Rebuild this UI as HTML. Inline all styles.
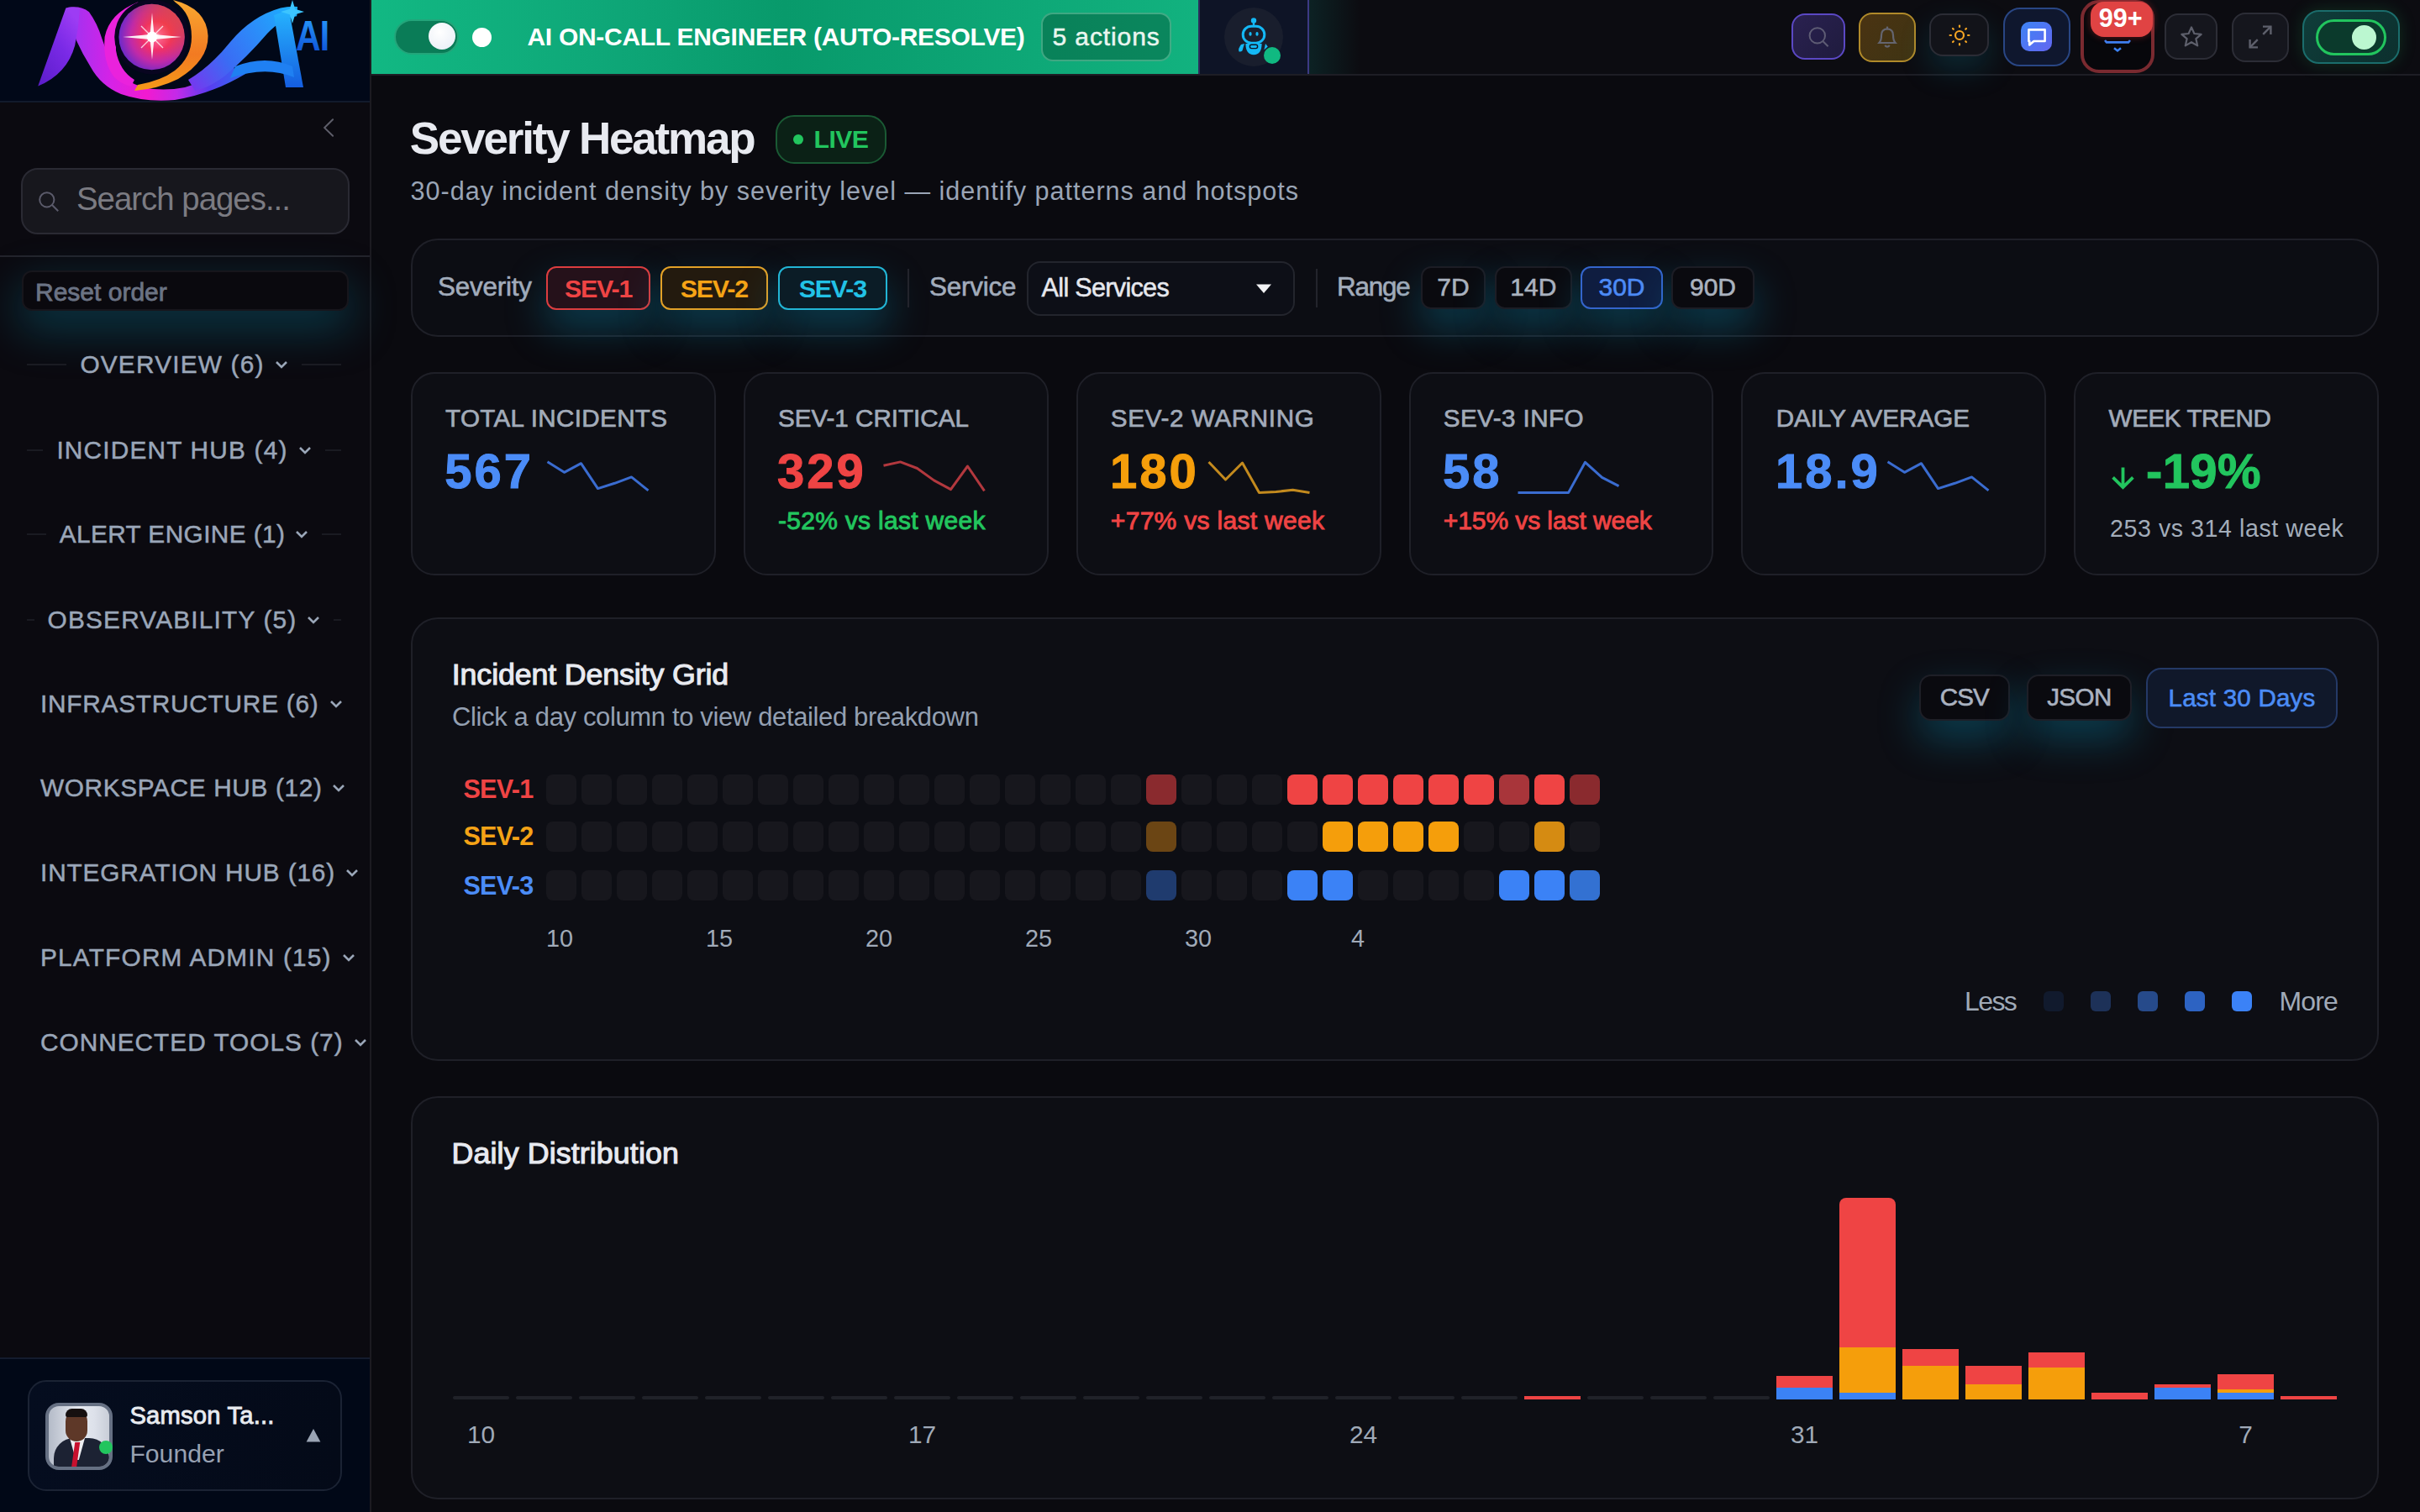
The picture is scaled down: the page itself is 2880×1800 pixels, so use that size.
<!DOCTYPE html>
<html><head><meta charset="utf-8">
<style>
html,body{margin:0;padding:0;background:#0a0a0f;overflow:hidden;}
#root{position:relative;width:1440px;height:900px;overflow:hidden;background:#0a0a0f;font-family:"Liberation Sans",sans-serif;}
.a{position:absolute;}
.t{position:absolute;white-space:nowrap;line-height:1;}
/* sidebar */
#side{position:absolute;left:0;top:0;width:221px;height:900px;background:#0b0a10;border-right:1px solid #1c1b21;box-sizing:border-box;}
#logo{position:absolute;left:0;top:0;width:220px;height:60px;background:#010818;border-bottom:1px solid #121a2c;}
.nav{position:absolute;left:0;width:219px;height:20px;}
.navt{position:absolute;white-space:nowrap;line-height:1;font-size:14.9px;color:#9aa6b8;letter-spacing:0.6px;font-weight:400;-webkit-text-stroke:0.25px #9aa6b8;}
.nline{position:absolute;height:1px;background:#1c1d24;}
/* topbar */
#top{position:absolute;left:221px;top:0;width:1219px;height:44px;background:#0c0c11;border-bottom:1px solid #1e1e25;box-sizing:content-box;}
.ib{position:absolute;box-sizing:border-box;border-radius:8px;}
/* main */
.card{position:absolute;box-sizing:border-box;background:#0d0e14;border:1px solid #1f2028;border-radius:14px;}
.glow{box-shadow:0 11px 24px rgba(8,140,175,0.38);}
.chip{position:absolute;box-sizing:border-box;border-radius:6px;display:flex;align-items:center;justify-content:center;white-space:nowrap;line-height:1;}
.lab{color:#a2abb9;font-size:14.8px;letter-spacing:0px;font-weight:400;-webkit-text-stroke:0.35px #a2abb9;}
.num{font-size:29px;font-weight:700;letter-spacing:1.5px;-webkit-text-stroke:0.5px currentColor;}
.cell{position:absolute;width:18px;height:18px;border-radius:4px;background:#17171d;}
.navrow{position:absolute;left:16px;width:187px;height:20px;display:flex;align-items:center;justify-content:center;justify-content:safe center;}
.navrow .navl{flex:1 1 0;height:1px;background:#1a1b22;min-width:0;}
.navrow .navt{position:static;margin-left:8px;}
.navrow .chv{position:static;margin-left:6px;margin-right:8px;flex:none;}
@media (min-width: 2000px){ #root{zoom:2;} }
</style></head>
<body><div id="root">

<!-- ============ SIDEBAR ============ -->

<div id="side">
  <div id="logo">
  <svg width="220" height="60" viewBox="0 0 220 60" style="position:absolute;left:0;top:0">
    <defs>
      <linearGradient id="gN" x1="0" y1="1" x2="0.7" y2="0"><stop offset="0" stop-color="#5a1cc8"/><stop offset="0.6" stop-color="#7a2ae6"/><stop offset="1" stop-color="#9d3cf4"/></linearGradient>
      <linearGradient id="gSw" gradientUnits="userSpaceOnUse" x1="40" y1="0" x2="145" y2="0"><stop offset="0" stop-color="#9a34f2"/><stop offset="0.25" stop-color="#d622e6"/><stop offset="0.45" stop-color="#f21ad0"/><stop offset="0.62" stop-color="#c42ae8"/><stop offset="0.8" stop-color="#5a3cf0"/><stop offset="1" stop-color="#2f6cf2"/></linearGradient>
      <linearGradient id="gBl" gradientUnits="userSpaceOnUse" x1="110" y1="50" x2="178" y2="4"><stop offset="0" stop-color="#7a34ee"/><stop offset="0.35" stop-color="#3a6cf4"/><stop offset="1" stop-color="#1ab4ff"/></linearGradient>
      <linearGradient id="gA" x1="0" y1="0" x2="0" y2="1"><stop offset="0" stop-color="#26b4ff"/><stop offset="1" stop-color="#155ee0"/></linearGradient>
      <radialGradient id="gOrb" cx="0.58" cy="0.48" r="0.62"><stop offset="0" stop-color="#fff2f8"/><stop offset="0.08" stop-color="#ff6aa0"/><stop offset="0.35" stop-color="#f0306a"/><stop offset="0.65" stop-color="#c02aa8"/><stop offset="1" stop-color="#5a2ad0"/></radialGradient>
      <linearGradient id="gOrbR" x1="0" y1="1" x2="1" y2="0"><stop offset="0.45" stop-color="#f04a20" stop-opacity="0"/><stop offset="1" stop-color="#f05a18" stop-opacity="0.85"/></linearGradient>
      <linearGradient id="gOr" x1="0" y1="0" x2="0" y2="1"><stop offset="0" stop-color="#f8a830"/><stop offset="0.6" stop-color="#f27a22"/><stop offset="1" stop-color="#f59a18"/></linearGradient>
      <linearGradient id="gAI" x1="0" y1="0" x2="0" y2="1"><stop offset="0" stop-color="#2aa0ff"/><stop offset="1" stop-color="#0a46d0"/></linearGradient>
    </defs>
    <!-- bottom swoosh (N diagonal) -->
    <path d="M40.2 4.5 Q48 3.2 53 7.1 Q58 14 60.6 22.8 Q64 33 69 41 Q75 49 85 52 Q97 54.5 110 52 Q124 48 138 40 L146 44 Q126 56 104 59.5 Q86 61 72 56 Q60 51 54 40 Q49 32 45.4 24 Q42 14 40.2 4.5Z" fill="url(#gSw)"/>
    <!-- N left leg -->
    <path d="M22.6 51.3 L39.2 4.8 Q43.5 3.6 47.5 5.2 Q46.8 16 44.6 27 Q40 44 22.6 51.3Z" fill="url(#gN)"/>
    <!-- magenta ring -->
    <path d="M82 1.2 Q65 8 62.3 22 Q61 37 68 46 Q72 50 78 51.5 L80 47.5 Q71 42 69 30 Q68 13 85 4Z" fill="#ea22dc"/>
    <!-- dark ring + orb -->
    <circle cx="90.3" cy="22" r="22.2" fill="#080520"/>
    <circle cx="90.3" cy="22" r="19.6" fill="url(#gOrb)"/>
    <circle cx="90.3" cy="22" r="19.6" fill="url(#gOrbR)"/>
    <!-- star -->
    <path d="M90.5 7.5 L91.7 20.5 L108 22 L91.7 23.5 L90.5 35.5 L89.3 23.5 L73 22 L89.3 20.5Z" fill="#fff" opacity="0.92"/>
    <path d="M84 15.5 L97 28.5 M97 15.5 L84 28.5" stroke="#fff" stroke-width="0.7" opacity="0.75"/>
    <circle cx="90.5" cy="22" r="3.2" fill="#fff"/>
    <!-- orange crescent + lower orange band -->
    <path d="M103 0 Q123 5 123.8 21.4 Q124 36 106 47 Q94 53 80 54 L82 50.5 Q96 48 104 42 Q114 34 114 22 Q114 8 104.5 1.5Z" fill="url(#gOr)"/>
    <!-- upper blue band -->
    <path d="M112 47.5 Q125 40 137 25 Q150 9.5 167 4.8 Q172 3.6 177 4 L176.6 9.6 Q168 10.5 159 20 Q147 34 134 45 Q125 52 116 54Z" fill="url(#gBl)"/>
    <!-- A right leg + crossbar -->
    <path d="M163 9 L172 6 L180.5 52 L170 52Z" fill="url(#gA)"/>
    <path d="M140 39.5 Q158 32.5 174 39.5 L175 46 Q158 39 137 46.5Z" fill="#1f80f2"/>
    <path d="M174 0 L175.6 5.4 L181 7 L175.6 8.6 L174 14 L172.4 8.6 L167 7 L172.4 5.4Z" fill="#3cc4ff"/>
    <g transform="translate(176,30) scale(0.82,1)"><text x="0" y="0" font-family="Liberation Sans" font-weight="700" font-size="25" fill="url(#gAI)" letter-spacing="-0.5">AI</text></g>
  </svg>
  </div>
  <svg class="a" style="left:191px;top:70px" width="9" height="13" viewBox="0 0 9 13"><path d="M7.05 1.1 L2.1 6.05 L7.05 10.85" stroke="#5e5e6a" stroke-width="1" fill="none" stroke-linecap="round"/></svg>
  <div class="a" style="left:12.25px;top:100.2px;width:195.5px;height:39.5px;box-sizing:border-box;border:1px solid #2a2a33;border-radius:10px;background:#17171d;"></div>
  <svg class="a" style="left:22px;top:113px" width="14" height="14" viewBox="0 0 14 14"><circle cx="5.9" cy="5.9" r="4.3" stroke="#5b5b6b" stroke-width="1" fill="none"/><path d="M9 9 L12.6 12.6" stroke="#5b5b6b" stroke-width="1"/></svg>
  <div class="t" style="left:45.5px;top:108.8px;font-size:19.2px;color:#7b7b82;letter-spacing:-0.5px;">Search pages...</div>
  <div class="a" style="left:0;top:152px;width:220px;height:1px;background:#23232b;"></div>
    <div class="a" style="left:12.75px;top:161.2px;width:194.5px;height:24px;box-sizing:border-box;border:1px solid #17161c;border-radius:6px;background:#0a090e;box-shadow:0 10px 26px 2px rgba(8,135,165,0.34);"></div>
  <div class="t" style="left:21px;top:166.4px;font-size:15px;color:#6b7384;-webkit-text-stroke:0.4px #6b7384;">Reset order</div>
  <div class="navrow" style="top:207.00px"><span class="navl"></span><span class="navt">OVERVIEW (6)</span><svg class="chv" width="8" height="5" viewBox="0 0 8 5"><path d="M1 1 L4 4 L7 1" stroke="#9aa6b8" stroke-width="1.3" fill="none"/></svg><span class="navl"></span></div>
  <div class="navrow" style="top:257.75px"><span class="navl"></span><span class="navt">INCIDENT HUB (4)</span><svg class="chv" width="8" height="5" viewBox="0 0 8 5"><path d="M1 1 L4 4 L7 1" stroke="#9aa6b8" stroke-width="1.3" fill="none"/></svg><span class="navl"></span></div>
  <div class="navrow" style="top:307.80px"><span class="navl"></span><span class="navt" style="letter-spacing:0.20px">ALERT ENGINE (1)</span><svg class="chv" width="8" height="5" viewBox="0 0 8 5"><path d="M1 1 L4 4 L7 1" stroke="#9aa6b8" stroke-width="1.3" fill="none"/></svg><span class="navl"></span></div>
  <div class="navrow" style="top:358.75px"><span class="navl"></span><span class="navt">OBSERVABILITY (5)</span><svg class="chv" width="8" height="5" viewBox="0 0 8 5"><path d="M1 1 L4 4 L7 1" stroke="#9aa6b8" stroke-width="1.3" fill="none"/></svg><span class="navl"></span></div>
  <div class="navrow" style="top:408.90px"><span class="navl"></span><span class="navt" style="letter-spacing:0.38px">INFRASTRUCTURE (6)</span><svg class="chv" width="8" height="5" viewBox="0 0 8 5"><path d="M1 1 L4 4 L7 1" stroke="#9aa6b8" stroke-width="1.3" fill="none"/></svg><span class="navl"></span></div>
  <div class="navrow" style="top:458.85px"><span class="navl"></span><span class="navt" style="letter-spacing:0.32px">WORKSPACE HUB (12)</span><svg class="chv" width="8" height="5" viewBox="0 0 8 5"><path d="M1 1 L4 4 L7 1" stroke="#9aa6b8" stroke-width="1.3" fill="none"/></svg><span class="navl"></span></div>
  <div class="navrow" style="top:509.65px"><span class="navl"></span><span class="navt" style="letter-spacing:0.43px">INTEGRATION HUB (16)</span><svg class="chv" width="8" height="5" viewBox="0 0 8 5"><path d="M1 1 L4 4 L7 1" stroke="#9aa6b8" stroke-width="1.3" fill="none"/></svg><span class="navl"></span></div>
  <div class="navrow" style="top:559.90px"><span class="navl"></span><span class="navt">PLATFORM ADMIN (15)</span><svg class="chv" width="8" height="5" viewBox="0 0 8 5"><path d="M1 1 L4 4 L7 1" stroke="#9aa6b8" stroke-width="1.3" fill="none"/></svg><span class="navl"></span></div>
  <div class="navrow" style="top:610.60px"><span class="navl"></span><span class="navt" style="letter-spacing:0.50px">CONNECTED TOOLS (7)</span><svg class="chv" width="8" height="5" viewBox="0 0 8 5"><path d="M1 1 L4 4 L7 1" stroke="#9aa6b8" stroke-width="1.3" fill="none"/></svg><span class="navl"></span></div>

  <div class="a" style="left:0;top:808px;width:220px;height:92px;border-top:1px solid #141c2e;background:#010817;"></div>
  <div class="a" style="left:16.4px;top:821.3px;width:187px;height:66px;box-sizing:border-box;border:1px solid #1b2334;border-radius:11px;background:linear-gradient(90deg,#050d1f,#040a18);"></div>
  <div class="a" style="left:27px;top:835px;width:40px;height:40px;box-sizing:border-box;border:2.2px solid #667083;border-radius:8px;overflow:hidden;background:linear-gradient(90deg,#b4bbc8,#e6e9f0 50%,#dde1ea 75%,#c9ced8);">
     <div class="a" style="left:3px;top:19px;width:33px;height:24px;border-radius:12px 12px 0 0;background:#1c2233;"></div>
     <div class="a" style="left:12.5px;top:19px;width:9px;height:13px;background:#eeeef2;clip-path:polygon(0 0,100% 0,60% 100%,40% 100%);"></div>
     <div class="a" style="left:14.6px;top:21.5px;width:3.2px;height:16px;background:#c8102e;transform:skewX(-8deg);"></div>
     <div class="a" style="left:9.8px;top:2.5px;width:13px;height:18.5px;border-radius:6.5px 6.5px 6.5px 6.5px;background:#5e3828;"></div>
     <div class="a" style="left:9.8px;top:1.5px;width:13px;height:5px;border-radius:6.5px 6.5px 2px 2px;background:#161010;"></div>
  </div>
  <div class="a" style="left:58.9px;top:857.5px;width:8.2px;height:8.2px;border-radius:50%;background:#22c55e;"></div>
  <div class="t" style="left:77.2px;top:835.7px;font-size:14.6px;color:#e8ebf0;-webkit-text-stroke:0.45px #e8ebf0;letter-spacing:0.1px;">Samson Ta...</div>
  <div class="t" style="left:77.2px;top:858.1px;font-size:15.1px;color:#97a1b2;">Founder</div>
  <svg class="a" style="left:181.5px;top:850px" width="10" height="9" viewBox="0 0 10 9"><path d="M5 0.5 L9.2 8.3 L0.8 8.3Z" fill="#9aa4b4"/></svg>
</div>


<!-- ============ TOPBAR ============ -->

<div id="top"></div>
<div class="a" style="left:221px;top:0;width:492px;height:44px;background:linear-gradient(90deg,#12b883 0%,#0ea677 30%,#089a6b 50%,#0ca373 70%,#12b27f 100%);"></div>
<div class="a" style="left:234.4px;top:11.25px;width:38.8px;height:21.1px;box-sizing:border-box;border-radius:11px;background:#0a7c57;border:1px solid #23a57a;"></div>
<div class="a" style="left:255px;top:13.6px;width:16px;height:16px;border-radius:50%;background:radial-gradient(circle at 40% 35%,#ffffff,#e6ecf5);"></div>
<div class="a" style="left:281.1px;top:16.5px;width:11.5px;height:11.5px;border-radius:50%;background:#fff;"></div>
<div class="t" style="left:313.7px;top:14.4px;font-size:15px;font-weight:700;color:#fff;letter-spacing:-0.14px;">AI ON-CALL ENGINEER (AUTO-RESOLVE)</div>
<div class="a" style="left:619.6px;top:7.45px;width:77.6px;height:29.25px;box-sizing:border-box;border-radius:7px;background:rgba(0,60,35,0.36);border:1px solid rgba(190,255,225,0.30);"></div>
<div class="t" style="left:626.3px;top:14.4px;font-size:15px;color:#e9f6ef;letter-spacing:0.44px;-webkit-text-stroke:0.25px #e9f6ef;">5 actions</div>
<div class="a" style="left:713px;top:0;width:66px;height:44px;box-sizing:border-box;background:#0e1426;border-left:1px solid #2e2c5c;border-right:1px solid #3d3a84;"></div>
<div class="a" style="left:779px;top:0;width:30px;height:44px;background:linear-gradient(90deg,rgba(13,148,136,0.16),rgba(13,148,136,0));"></div>
<div class="a" style="left:728.35px;top:4.4px;width:35px;height:35px;border-radius:50%;background:#191e2d;"></div>
<svg class="a" style="left:736px;top:10px" width="20" height="24" viewBox="0 0 20 24">
  <circle cx="10" cy="2.2" r="1.6" fill="#14b8f5"/><rect x="9.4" y="2.5" width="1.2" height="3" fill="#14b8f5"/>
  <rect x="3.6" y="5.6" width="12.8" height="10" rx="5" fill="none" stroke="#14b8f5" stroke-width="1.5"/>
  <ellipse cx="8" cy="10.2" rx="0.8" ry="1.2" fill="#14b8f5"/><ellipse cx="12" cy="10.2" rx="0.8" ry="1.2" fill="#14b8f5"/>
  <path d="M5.2 16 Q5.2 22.4 10 22.6 Q14.8 22.4 14.8 16 Z" fill="#14b8f5"/>
  <path d="M2.5 16.5 Q0.6 19 1.2 20.6 Q2.2 21 3.2 20.2 L4.5 16Z" fill="#14b8f5"/>
  <path d="M17 16 L18.4 17.8 L16.2 19.6Z" fill="#14b8f5"/>
  <rect x="7.7" y="16.6" width="4.6" height="2.2" rx="1" fill="none" stroke="#0e1426" stroke-width="0.7"/>
</svg>
<div class="a" style="left:752px;top:27.85px;width:10px;height:10px;border-radius:50%;background:#10b981;"></div>

<div class="ib" style="left:1066px;top:8px;width:32px;height:27.5px;background:linear-gradient(135deg,#2a2150,#1f1b3e);border:1px solid #5b48c4;"></div>
<svg class="a" style="left:1074px;top:14px" width="16" height="16" viewBox="0 0 16 16"><circle cx="7.4" cy="7.2" r="4.6" stroke="#5e5c74" stroke-width="1" fill="none"/><path d="M10.8 10.6 L13.8 13.6" stroke="#5e5c74" stroke-width="1"/></svg>
<div class="ib" style="left:1106px;top:7.25px;width:34px;height:29.5px;background:linear-gradient(135deg,#4a3312,#3f3413);border:1px solid #b08a2a;"></div>
<svg class="a" style="left:1115px;top:14px" width="16" height="16" viewBox="0 0 16 16"><path d="M3.2 11.5 Q4.5 10 4.5 7 Q4.5 3.4 8 3.2 Q11.5 3.4 11.5 7 Q11.5 10 12.8 11.5 Z" stroke="#646570" stroke-width="1.1" fill="none"/><path d="M6.6 13 Q8 14.6 9.4 13" stroke="#646570" stroke-width="1.1" fill="none"/><path d="M8 1.8 L8 3.2" stroke="#646570" stroke-width="1.1"/></svg>
<div class="ib" style="left:1148px;top:8px;width:35.5px;height:25.5px;background:#121319;border:1px solid #2b2c35;box-shadow:0 8px 18px rgba(8,140,170,0.22);"></div>
<svg class="a" style="left:1159px;top:14px" width="14" height="14" viewBox="0 0 14 14"><circle cx="7" cy="7" r="2.5" stroke="#f5a524" stroke-width="1.1" fill="none"/>
<g stroke="#f5a524" stroke-width="1.1" stroke-linecap="round"><path d="M7 1.3V2"/><path d="M7 12V12.7"/><path d="M1.3 7H2"/><path d="M12 7H12.7"/><path d="M3 3L3.4 3.4"/><path d="M10.6 10.6L11 11"/><path d="M3 11L3.4 10.6"/><path d="M10.6 3.4L11 3"/></g></svg>
<div class="ib" style="left:1192px;top:4.5px;width:40px;height:35px;border-radius:10px;background:#0f172e;border:1px solid #294684;"></div>
<div class="a" style="left:1202.5px;top:13px;width:18.5px;height:17.5px;border-radius:5px;background:linear-gradient(135deg,#3d84f5,#6366f1);"></div>
<svg class="a" style="left:1205px;top:15.5px" width="14" height="13" viewBox="0 0 14 13"><path d="M2.2 2.2 H11.8 V9 H5.2 L2.6 11.2 V9 H2.2 Z" stroke="#fff" stroke-width="1.3" fill="none" stroke-linejoin="round"/></svg>
<div class="ib" style="left:1237.75px;top:0px;width:44.25px;height:43.5px;border-radius:11px;background:#07070b;border:2px solid #7a2a30;"></div>
<svg class="a" style="left:1250px;top:22px" width="20" height="10" viewBox="0 0 20 10"><path d="M2.5 2 L3.5 3.2 H16.5 L17.5 2" stroke="#3b82f6" stroke-width="1.3" fill="none"/><path d="M8 6.6 L10 8.2 L12 6.6" stroke="#3b82f6" stroke-width="1.3" fill="none"/></svg>
<div class="a" style="left:1244.1px;top:0.9px;width:36.75px;height:21.1px;border-radius:8px;background:#e04343;box-shadow:0 0 4px rgba(220,50,50,0.4);"></div>
<div class="t" style="left:1248.9px;top:3.1px;font-size:15.3px;font-weight:700;color:#fff;">99+</div>
<div class="ib" style="left:1288px;top:8px;width:31.5px;height:27.5px;background:#15161d;border:1px solid #2c2d36;"></div>
<svg class="a" style="left:1297px;top:15px" width="14" height="14" viewBox="0 0 14 14"><path d="M7 1.2 L8.7 5 L12.8 5.4 L9.7 8.1 L10.6 12.2 L7 10.1 L3.4 12.2 L4.3 8.1 L1.2 5.4 L5.3 5 Z" stroke="#5e606c" stroke-width="1.1" fill="none" stroke-linejoin="round"/></svg>
<div class="ib" style="left:1328px;top:7.25px;width:34px;height:29.5px;background:#15161d;border:1px solid #2c2d36;"></div>
<svg class="a" style="left:1337px;top:14px" width="16" height="16" viewBox="0 0 16 16"><g stroke="#5e606c" stroke-width="1.2" fill="none"><path d="M9.5 1.8 H14.2 V6.5"/><path d="M14.2 1.8 L9.6 6.4"/><path d="M6.5 14.2 H1.8 V9.5"/><path d="M1.8 14.2 L6.4 9.6"/></g></svg>
<div class="ib" style="left:1370px;top:6px;width:58px;height:32px;border-radius:10px;background:linear-gradient(135deg,#0f3d3a,#0c302e);border:1px solid #1b6d6c;box-shadow:0 0 10px rgba(34,197,94,0.18);"></div>
<div class="a" style="left:1378px;top:11.25px;width:42px;height:21.5px;box-sizing:border-box;border-radius:11px;background:#0b3a2c;border:1.8px solid #22c55e;"></div>
<div class="a" style="left:1399.5px;top:14.75px;width:14.5px;height:14.5px;border-radius:50%;background:#bbf7d0;"></div>


<!-- ============ MAIN ============ -->
<!-- title -->
<div class="t" style="left:243.9px;top:69px;font-size:26.5px;font-weight:700;color:#e8eaf0;letter-spacing:-1.1px;">Severity Heatmap</div>
<div class="a" style="left:461.3px;top:68.3px;width:66.35px;height:29.15px;box-sizing:border-box;border-radius:11px;background:#0b2116;border:1px solid #1a5a34;"></div>
<div class="a" style="left:471.85px;top:79.8px;width:6.2px;height:6.2px;border-radius:50%;background:#22c55e;"></div>
<div class="t" style="left:484.3px;top:75.5px;font-size:15.1px;font-weight:700;color:#22c55e;letter-spacing:-0.3px;">LIVE</div>
<div class="t" style="left:244.3px;top:105.9px;font-size:15.3px;color:#9aa5b6;letter-spacing:0.48px;">30-day incident density by severity level — identify patterns and hotspots</div>

<!-- filter bar -->
<div class="card" style="left:244.4px;top:142px;width:1171px;height:58.5px;border-radius:16px;background:#0c0d13;"></div>
<div class="t" style="left:260.5px;top:163px;font-size:15.7px;color:#a2acbb;letter-spacing:-0.1px;-webkit-text-stroke:0.3px #a2acbb;">Severity</div>
<div class="chip glow" style="left:325px;top:158.4px;width:62px;height:26.3px;border:1.3px solid #dc3d3f;background:#25111a;color:#ef4444;font-size:15.2px;font-weight:700;letter-spacing:-0.6px;">SEV-1</div>
<div class="chip glow" style="left:393px;top:158.4px;width:63.8px;height:26.3px;border:1.3px solid #e3a127;background:#231a0e;color:#f5a316;font-size:15.2px;font-weight:700;letter-spacing:-0.6px;">SEV-2</div>
<div class="chip glow" style="left:463px;top:158.4px;width:64.75px;height:26.3px;border:1.3px solid #22b5d5;background:#0b1c26;color:#22c2e6;font-size:15.2px;font-weight:700;letter-spacing:-0.6px;">SEV-3</div>
<div class="a" style="left:540px;top:160px;width:1px;height:23px;background:#23242c;"></div>
<div class="t" style="left:553px;top:163px;font-size:15.7px;color:#a2acbb;letter-spacing:-0.1px;-webkit-text-stroke:0.3px #a2acbb;">Service</div>
<div class="a" style="left:611px;top:155.5px;width:159.5px;height:32.3px;box-sizing:border-box;border-radius:8px;background:#0d0f17;border:1px solid #23252d;"></div>
<div class="t" style="left:619.8px;top:163.3px;font-size:15.3px;color:#e6e8ee;letter-spacing:-0.35px;-webkit-text-stroke:0.25px #e6e8ee;">All Services</div>
<svg class="a" style="left:746.5px;top:168.4px" width="11" height="7" viewBox="0 0 11 7"><path d="M1 0.8 H10 L5.5 6Z" fill="#f2f3f5"/></svg>
<div class="a" style="left:783px;top:160px;width:1px;height:23px;background:#23242c;"></div>
<div class="t" style="left:795.5px;top:163px;font-size:15.7px;color:#a2acbb;letter-spacing:-0.6px;-webkit-text-stroke:0.3px #a2acbb;">Range</div>
<div class="chip glow" style="left:845.5px;top:158.4px;width:38.5px;height:25.6px;border:1px solid #1c1d25;background:#0a0a0f;color:#aab2bf;font-size:15px;-webkit-text-stroke:0.3px #aab2bf;">7D</div>
<div class="chip glow" style="left:889.5px;top:158.4px;width:45.8px;height:25.6px;border:1px solid #1c1d25;background:#0a0a0f;color:#aab2bf;font-size:15px;-webkit-text-stroke:0.3px #aab2bf;">14D</div>
<div class="chip glow" style="left:940.5px;top:158.4px;width:49px;height:25.6px;border:1px solid #3465cc;background:#0f1d40;color:#4d8bf5;font-size:15px;-webkit-text-stroke:0.3px #4d8bf5;">30D</div>
<div class="chip glow" style="left:994.5px;top:158.4px;width:49.5px;height:25.6px;border:1px solid #1c1d25;background:#0a0a0f;color:#aab2bf;font-size:15px;-webkit-text-stroke:0.3px #aab2bf;">90D</div>


<!-- stat cards -->
<div class="card" style="left:244.40px;top:221.5px;width:181.45px;height:120.8px;"></div>
<div class="card" style="left:442.36px;top:221.5px;width:181.45px;height:120.8px;"></div>
<div class="card" style="left:640.32px;top:221.5px;width:181.45px;height:120.8px;"></div>
<div class="card" style="left:838.28px;top:221.5px;width:181.45px;height:120.8px;"></div>
<div class="card" style="left:1036.24px;top:221.5px;width:181.45px;height:120.8px;"></div>
<div class="card" style="left:1234.20px;top:221.5px;width:181.45px;height:120.8px;"></div>
<div class="t lab" style="left:265.00px;top:241.35px;letter-spacing:0.17px;">TOTAL INCIDENTS</div>
<div class="t num" style="left:264.60px;top:266.2px;color:#4b8cf7;">567</div>
<svg class="a" style="left:325.10px;top:273.25px" width="62" height="22" viewBox="0 0 62 22"><polyline points="0.75,1.35 10.75,7.65 20.75,2.35 30.75,17.30 40.75,14.15 50.75,10.45 60.75,18.45" fill="none" stroke="#3a6cd0" stroke-width="1.5" stroke-linejoin="round"/></svg>
<div class="t lab" style="left:462.96px;top:241.35px;">SEV-1 CRITICAL</div>
<div class="t num" style="left:462.56px;top:266.2px;color:#ef4444;">329</div>
<svg class="a" style="left:525.20px;top:273.25px" width="62" height="22" viewBox="0 0 62 22"><polyline points="0.75,3.60 10.75,1.45 20.75,5.25 30.75,12.45 40.75,17.80 50.75,4.00 60.75,18.65" fill="none" stroke="#b2383e" stroke-width="1.5" stroke-linejoin="round"/></svg>
<div class="t" style="left:462.96px;top:302.32px;font-size:15px;color:#22c55e;letter-spacing:0.15px;-webkit-text-stroke:0.45px #22c55e;">-52% vs last week</div>
<div class="t lab" style="left:660.92px;top:241.35px;letter-spacing:0.33px;">SEV-2 WARNING</div>
<div class="t num" style="left:660.52px;top:266.2px;color:#f59e0b;">180</div>
<svg class="a" style="left:718.50px;top:273.25px" width="62" height="22" viewBox="0 0 62 22"><polyline points="0.75,1.50 10.75,12.00 20.75,2.00 30.75,19.75 40.75,19.25 50.75,18.10 60.75,19.75" fill="none" stroke="#c38a1e" stroke-width="1.5" stroke-linejoin="round"/></svg>
<div class="t" style="left:660.92px;top:302.32px;font-size:15px;color:#ef4444;letter-spacing:0.15px;-webkit-text-stroke:0.45px #ef4444;">+77% vs last week</div>
<div class="t lab" style="left:858.88px;top:241.35px;letter-spacing:0.22px;">SEV-3 INFO</div>
<div class="t num" style="left:858.48px;top:266.2px;color:#4b8cf7;">58</div>
<svg class="a" style="left:902.45px;top:273.25px" width="62" height="22" viewBox="0 0 62 22"><polyline points="0.75,19.80 10.75,19.80 20.75,19.80 30.75,19.80 40.75,1.65 50.75,10.70 60.75,15.85" fill="none" stroke="#3a6cd0" stroke-width="1.5" stroke-linejoin="round"/></svg>
<div class="t" style="left:858.88px;top:302.32px;font-size:15px;color:#ef4444;letter-spacing:-0.04px;-webkit-text-stroke:0.45px #ef4444;">+15% vs last week</div>
<div class="t lab" style="left:1056.84px;top:241.35px;">DAILY AVERAGE</div>
<div class="t num" style="left:1056.44px;top:266.2px;color:#4b8cf7;">18.9</div>
<svg class="a" style="left:1122.25px;top:273.25px" width="62" height="22" viewBox="0 0 62 22"><polyline points="0.75,1.35 10.75,7.65 20.75,2.35 30.75,17.30 40.75,14.15 50.75,10.45 60.75,18.45" fill="none" stroke="#3a6cd0" stroke-width="1.5" stroke-linejoin="round"/></svg>
<div class="t lab" style="left:1254.80px;top:241.35px;letter-spacing:-0.20px;">WEEK TREND</div>
<svg class="a" style="left:1256px;top:277.5px" width="15" height="14" viewBox="0 0 15 14"><path d="M7.25 0.8 V12.4 M1.3 6.7 L7.25 12.5 L13.2 6.7" stroke="#22c55e" stroke-width="1.9" fill="none" stroke-linecap="butt" stroke-linejoin="miter"/></svg>
<div class="t num" style="left:1277px;top:266.2px;color:#22c55e;letter-spacing:0.2px;">-19%</div>
<div class="t" style="left:1255.50px;top:307.63px;font-size:14.3px;color:#a3adba;letter-spacing:0.28px;">253 vs 314 last week</div>

<!-- heatmap card -->
<div class="card" style="left:244.4px;top:367.3px;width:1171.3px;height:264.1px;border-radius:16px;"></div>
<div class="t" style="left:268.9px;top:393.16px;font-size:17.9px;color:#e8eaf0;letter-spacing:-0.07px;-webkit-text-stroke:0.55px #e8eaf0;">Incident Density Grid</div>
<div class="t" style="left:269px;top:418.9px;font-size:15.5px;color:#94a0b2;letter-spacing:-0.18px;">Click a day column to view detailed breakdown</div>
<div class="chip glow" style="left:1141.8px;top:401.25px;width:54.2px;height:27.75px;border:1px solid #1e1f27;border-radius:7px;background:#0a0a0f;color:#aab2c0;font-size:14.8px;letter-spacing:-0.5px;-webkit-text-stroke:0.3px #aab2c0;">CSV</div>
<div class="chip glow" style="left:1206px;top:401.25px;width:62.4px;height:27.75px;border:1px solid #1e1f27;border-radius:7px;background:#0a0a0f;color:#aab2c0;font-size:14.8px;letter-spacing:-0.3px;-webkit-text-stroke:0.3px #aab2c0;">JSON</div>
<div class="chip" style="left:1277.15px;top:397.3px;width:113.75px;height:36.4px;border:1px solid #243966;border-radius:9px;background:#10182a;color:#4b8cf5;font-size:14.8px;letter-spacing:0.1px;-webkit-text-stroke:0.3px #4b8cf5;">Last 30 Days</div>
<div class="t" style="right:1122.70px;top:462.21px;font-size:15.3px;font-weight:700;color:#ef4444;text-align:right;letter-spacing:-0.35px;">SEV-1</div>
<div class="t" style="right:1122.70px;top:490.21px;font-size:15.3px;font-weight:700;color:#f5a316;text-align:right;letter-spacing:-0.35px;">SEV-2</div>
<div class="t" style="right:1122.70px;top:519.26px;font-size:15.3px;font-weight:700;color:#4b8cf7;text-align:right;letter-spacing:-0.35px;">SEV-3</div>
<div class="cell" style="left:324.75px;top:460.90px;"></div><div class="cell" style="left:345.75px;top:460.90px;"></div><div class="cell" style="left:366.75px;top:460.90px;"></div><div class="cell" style="left:387.75px;top:460.90px;"></div><div class="cell" style="left:408.75px;top:460.90px;"></div><div class="cell" style="left:429.75px;top:460.90px;"></div><div class="cell" style="left:450.75px;top:460.90px;"></div><div class="cell" style="left:471.75px;top:460.90px;"></div><div class="cell" style="left:492.75px;top:460.90px;"></div><div class="cell" style="left:513.75px;top:460.90px;"></div><div class="cell" style="left:534.75px;top:460.90px;"></div><div class="cell" style="left:555.75px;top:460.90px;"></div><div class="cell" style="left:576.75px;top:460.90px;"></div><div class="cell" style="left:597.75px;top:460.90px;"></div><div class="cell" style="left:618.75px;top:460.90px;"></div><div class="cell" style="left:639.75px;top:460.90px;"></div><div class="cell" style="left:660.75px;top:460.90px;"></div><div class="cell" style="left:681.75px;top:460.90px;background:#8a2a2e;"></div><div class="cell" style="left:702.75px;top:460.90px;"></div><div class="cell" style="left:723.75px;top:460.90px;"></div><div class="cell" style="left:744.75px;top:460.90px;"></div><div class="cell" style="left:765.75px;top:460.90px;background:#ef4444;"></div><div class="cell" style="left:786.75px;top:460.90px;background:#ef4444;"></div><div class="cell" style="left:807.75px;top:460.90px;background:#ef4444;"></div><div class="cell" style="left:828.75px;top:460.90px;background:#ef4444;"></div><div class="cell" style="left:849.75px;top:460.90px;background:#ef4444;"></div><div class="cell" style="left:870.75px;top:460.90px;background:#ef4444;"></div><div class="cell" style="left:891.75px;top:460.90px;background:#a8353a;"></div><div class="cell" style="left:912.75px;top:460.90px;background:#ef4444;"></div><div class="cell" style="left:933.75px;top:460.90px;background:#8a2a2e;"></div>
<div class="cell" style="left:324.75px;top:489.00px;"></div><div class="cell" style="left:345.75px;top:489.00px;"></div><div class="cell" style="left:366.75px;top:489.00px;"></div><div class="cell" style="left:387.75px;top:489.00px;"></div><div class="cell" style="left:408.75px;top:489.00px;"></div><div class="cell" style="left:429.75px;top:489.00px;"></div><div class="cell" style="left:450.75px;top:489.00px;"></div><div class="cell" style="left:471.75px;top:489.00px;"></div><div class="cell" style="left:492.75px;top:489.00px;"></div><div class="cell" style="left:513.75px;top:489.00px;"></div><div class="cell" style="left:534.75px;top:489.00px;"></div><div class="cell" style="left:555.75px;top:489.00px;"></div><div class="cell" style="left:576.75px;top:489.00px;"></div><div class="cell" style="left:597.75px;top:489.00px;"></div><div class="cell" style="left:618.75px;top:489.00px;"></div><div class="cell" style="left:639.75px;top:489.00px;"></div><div class="cell" style="left:660.75px;top:489.00px;"></div><div class="cell" style="left:681.75px;top:489.00px;background:#6b4514;"></div><div class="cell" style="left:702.75px;top:489.00px;"></div><div class="cell" style="left:723.75px;top:489.00px;"></div><div class="cell" style="left:744.75px;top:489.00px;"></div><div class="cell" style="left:765.75px;top:489.00px;"></div><div class="cell" style="left:786.75px;top:489.00px;background:#f59e0b;"></div><div class="cell" style="left:807.75px;top:489.00px;background:#f59e0b;"></div><div class="cell" style="left:828.75px;top:489.00px;background:#f59e0b;"></div><div class="cell" style="left:849.75px;top:489.00px;background:#f59e0b;"></div><div class="cell" style="left:870.75px;top:489.00px;"></div><div class="cell" style="left:891.75px;top:489.00px;"></div><div class="cell" style="left:912.75px;top:489.00px;background:#d58b12;"></div><div class="cell" style="left:933.75px;top:489.00px;"></div>
<div class="cell" style="left:324.75px;top:518.10px;"></div><div class="cell" style="left:345.75px;top:518.10px;"></div><div class="cell" style="left:366.75px;top:518.10px;"></div><div class="cell" style="left:387.75px;top:518.10px;"></div><div class="cell" style="left:408.75px;top:518.10px;"></div><div class="cell" style="left:429.75px;top:518.10px;"></div><div class="cell" style="left:450.75px;top:518.10px;"></div><div class="cell" style="left:471.75px;top:518.10px;"></div><div class="cell" style="left:492.75px;top:518.10px;"></div><div class="cell" style="left:513.75px;top:518.10px;"></div><div class="cell" style="left:534.75px;top:518.10px;"></div><div class="cell" style="left:555.75px;top:518.10px;"></div><div class="cell" style="left:576.75px;top:518.10px;"></div><div class="cell" style="left:597.75px;top:518.10px;"></div><div class="cell" style="left:618.75px;top:518.10px;"></div><div class="cell" style="left:639.75px;top:518.10px;"></div><div class="cell" style="left:660.75px;top:518.10px;"></div><div class="cell" style="left:681.75px;top:518.10px;background:#1f3b6e;"></div><div class="cell" style="left:702.75px;top:518.10px;"></div><div class="cell" style="left:723.75px;top:518.10px;"></div><div class="cell" style="left:744.75px;top:518.10px;"></div><div class="cell" style="left:765.75px;top:518.10px;background:#3b82f6;"></div><div class="cell" style="left:786.75px;top:518.10px;background:#3b82f6;"></div><div class="cell" style="left:807.75px;top:518.10px;"></div><div class="cell" style="left:828.75px;top:518.10px;"></div><div class="cell" style="left:849.75px;top:518.10px;"></div><div class="cell" style="left:870.75px;top:518.10px;"></div><div class="cell" style="left:891.75px;top:518.10px;background:#3b82f6;"></div><div class="cell" style="left:912.75px;top:518.10px;background:#3b82f6;"></div><div class="cell" style="left:933.75px;top:518.10px;background:#3371d2;"></div>
<div class="t" style="left:325.00px;top:551.52px;font-size:14.4px;color:#a0aab8;">10</div>
<div class="t" style="left:420.00px;top:551.52px;font-size:14.4px;color:#a0aab8;">15</div>
<div class="t" style="left:515.00px;top:551.52px;font-size:14.4px;color:#a0aab8;">20</div>
<div class="t" style="left:610.00px;top:551.52px;font-size:14.4px;color:#a0aab8;">25</div>
<div class="t" style="left:705.00px;top:551.52px;font-size:14.4px;color:#a0aab8;">30</div>
<div class="t" style="left:801.50px;top:551.52px;font-size:14.4px;color:#a0aab8;margin-left:2.5px;">4</div>
<div class="t" style="left:1169px;top:587.8px;font-size:16px;color:#a0aab8;letter-spacing:-0.8px;">Less</div>
<div class="a" style="left:1215.90px;top:590.15px;width:12px;height:12px;border-radius:3px;background:#111a2d;"></div><div class="a" style="left:1243.90px;top:590.15px;width:12px;height:12px;border-radius:3px;background:#1d3158;"></div><div class="a" style="left:1271.90px;top:590.15px;width:12px;height:12px;border-radius:3px;background:#264a8a;"></div><div class="a" style="left:1299.90px;top:590.15px;width:12px;height:12px;border-radius:3px;background:#2d63c2;"></div><div class="a" style="left:1327.90px;top:590.15px;width:12px;height:12px;border-radius:3px;background:#3b82f6;"></div>
<div class="t" style="left:1356.3px;top:587.8px;font-size:16px;color:#a0aab8;letter-spacing:-0.45px;">More</div>

<!-- distribution card -->
<div class="card" style="left:244.4px;top:652.4px;width:1171.3px;height:240.1px;border-radius:16px;"></div>
<div class="t" style="left:268.8px;top:678.16px;font-size:17.9px;color:#e8eaf0;letter-spacing:0.05px;-webkit-text-stroke:0.55px #e8eaf0;">Daily Distribution</div>
<div class="a" style="left:269.50px;top:830.85px;width:33.5px;height:2px;border-radius:1px;background:#202229;"></div>
<div class="a" style="left:307.00px;top:830.85px;width:33.5px;height:2px;border-radius:1px;background:#202229;"></div>
<div class="a" style="left:344.50px;top:830.85px;width:33.5px;height:2px;border-radius:1px;background:#202229;"></div>
<div class="a" style="left:382.00px;top:830.85px;width:33.5px;height:2px;border-radius:1px;background:#202229;"></div>
<div class="a" style="left:419.50px;top:830.85px;width:33.5px;height:2px;border-radius:1px;background:#202229;"></div>
<div class="a" style="left:457.00px;top:830.85px;width:33.5px;height:2px;border-radius:1px;background:#202229;"></div>
<div class="a" style="left:494.50px;top:830.85px;width:33.5px;height:2px;border-radius:1px;background:#202229;"></div>
<div class="a" style="left:532.00px;top:830.85px;width:33.5px;height:2px;border-radius:1px;background:#202229;"></div>
<div class="a" style="left:569.50px;top:830.85px;width:33.5px;height:2px;border-radius:1px;background:#202229;"></div>
<div class="a" style="left:607.00px;top:830.85px;width:33.5px;height:2px;border-radius:1px;background:#202229;"></div>
<div class="a" style="left:644.50px;top:830.85px;width:33.5px;height:2px;border-radius:1px;background:#202229;"></div>
<div class="a" style="left:682.00px;top:830.85px;width:33.5px;height:2px;border-radius:1px;background:#202229;"></div>
<div class="a" style="left:719.50px;top:830.85px;width:33.5px;height:2px;border-radius:1px;background:#202229;"></div>
<div class="a" style="left:757.00px;top:830.85px;width:33.5px;height:2px;border-radius:1px;background:#202229;"></div>
<div class="a" style="left:794.50px;top:830.85px;width:33.5px;height:2px;border-radius:1px;background:#202229;"></div>
<div class="a" style="left:832.00px;top:830.85px;width:33.5px;height:2px;border-radius:1px;background:#202229;"></div>
<div class="a" style="left:869.50px;top:830.85px;width:33.5px;height:2px;border-radius:1px;background:#202229;"></div>
<div class="a" style="left:907.00px;top:830.85px;width:33.5px;height:2.00px;background:#ef4444;"></div>
<div class="a" style="left:944.50px;top:830.85px;width:33.5px;height:2px;border-radius:1px;background:#202229;"></div>
<div class="a" style="left:982.00px;top:830.85px;width:33.5px;height:2px;border-radius:1px;background:#202229;"></div>
<div class="a" style="left:1019.50px;top:830.85px;width:33.5px;height:2px;border-radius:1px;background:#202229;"></div>
<div class="a" style="left:1057.00px;top:825.90px;width:33.5px;height:6.95px;background:#3b82f6;"></div><div class="a" style="left:1057.00px;top:818.75px;width:33.5px;height:7.15px;background:#ef4444;"></div>
<div class="a" style="left:1094.50px;top:828.95px;width:33.5px;height:3.90px;background:#3b82f6;"></div><div class="a" style="left:1094.50px;top:801.85px;width:33.5px;height:27.10px;background:#f59e0b;"></div><div class="a" style="left:1094.50px;top:712.85px;width:33.5px;height:89.00px;background:#ef4444;border-radius:4px 4px 0 0;"></div>
<div class="a" style="left:1132.00px;top:813.00px;width:33.5px;height:19.85px;background:#f59e0b;"></div><div class="a" style="left:1132.00px;top:802.85px;width:33.5px;height:10.15px;background:#ef4444;"></div>
<div class="a" style="left:1169.50px;top:823.85px;width:33.5px;height:9.00px;background:#f59e0b;"></div><div class="a" style="left:1169.50px;top:812.85px;width:33.5px;height:11.00px;background:#ef4444;"></div>
<div class="a" style="left:1207.00px;top:814.00px;width:33.5px;height:18.85px;background:#f59e0b;"></div><div class="a" style="left:1207.00px;top:804.90px;width:33.5px;height:9.10px;background:#ef4444;"></div>
<div class="a" style="left:1244.50px;top:828.95px;width:33.5px;height:3.90px;background:#ef4444;"></div>
<div class="a" style="left:1282.00px;top:825.90px;width:33.5px;height:6.95px;background:#3b82f6;"></div><div class="a" style="left:1282.00px;top:823.85px;width:33.5px;height:2.05px;background:#ef4444;"></div>
<div class="a" style="left:1319.50px;top:828.95px;width:33.5px;height:3.90px;background:#3b82f6;"></div><div class="a" style="left:1319.50px;top:826.90px;width:33.5px;height:2.05px;background:#f59e0b;"></div><div class="a" style="left:1319.50px;top:817.90px;width:33.5px;height:9.00px;background:#ef4444;"></div>
<div class="a" style="left:1357.00px;top:830.85px;width:33.5px;height:2.00px;background:#ef4444;"></div>
<div class="t" style="left:266.25px;top:846.39px;width:40px;text-align:center;font-size:14.9px;color:#a0aab8;">10</div>
<div class="t" style="left:528.75px;top:846.39px;width:40px;text-align:center;font-size:14.9px;color:#a0aab8;">17</div>
<div class="t" style="left:791.25px;top:846.39px;width:40px;text-align:center;font-size:14.9px;color:#a0aab8;">24</div>
<div class="t" style="left:1053.75px;top:846.39px;width:40px;text-align:center;font-size:14.9px;color:#a0aab8;">31</div>
<div class="t" style="left:1316.25px;top:846.39px;width:40px;text-align:center;font-size:14.9px;color:#a0aab8;">7</div>

</div></body></html>
